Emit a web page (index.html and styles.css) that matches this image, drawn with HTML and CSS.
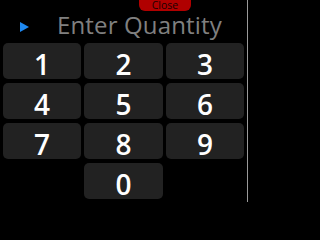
FILE: index.html
```html
<!DOCTYPE html>
<html>
<head>
<meta charset="utf-8">
<link rel="stylesheet" href="styles.css">
</head>
<body>
<div class="screen">
  <div class="header">
    <div class="close">Close</div>
    <svg class="arrow" width="9" height="10" viewBox="0 0 9 10"><polygon points="0,0 9,5 0,10" fill="#1e88f0"/></svg>
    <div class="title">Enter Quantity</div>
  </div>
  <div class="keypad">
    <div class="key">1</div>
    <div class="key">2</div>
    <div class="key">3</div>
    <div class="key">4</div>
    <div class="key">5</div>
    <div class="key">6</div>
    <div class="key">7</div>
    <div class="key">8</div>
    <div class="key">9</div>
    <div class="key zero">0</div>
  </div>
</div>
</body>
</html>
```
FILE: styles.css
```css
html, body {
  margin: 0;
  padding: 0;
  background: #000;
}
.screen {
  width: 247px;
  height: 202px;
  border-right: 1px solid #9a9a9a;
  background: #000;
  font-family: "Open Sans", "Noto Sans", sans-serif;
  box-sizing: content-box;
}
.header {
  position: relative;
  height: 43px;
  display: flex;
  align-items: flex-start;
}
.close {
  position: absolute;
  left: 139px;
  top: 0;
  width: 52px;
  height: 11px;
  background: #b00000;
  border-radius: 0 0 6px 6px;
  color: #1a0000;
  font-size: 10.5px;
  line-height: 11px;
  text-align: center;
}
.arrow {
  margin-left: 20px;
  margin-top: 22px;
}
.title {
  margin-left: 28px;
  margin-top: 12px;
  font-size: 24px;
  line-height: 26px;
  color: #808080;
  white-space: nowrap;
  letter-spacing: 0.15px;
}
.keypad {
  display: grid;
  grid-template-columns: 78px 79px 78px;
  grid-auto-rows: 36px;
  column-gap: 3px;
  row-gap: 4px;
  padding: 0 3px;
}
.key {
  background: #222222;
  border-radius: 5px;
  color: #ffffff;
  font-size: 28px;
  font-weight: 600;
  line-height: 36px;
  padding-top: 3px;
  height: 33px;
  text-align: center;
}
.zero {
  grid-column: 2;
}
```
